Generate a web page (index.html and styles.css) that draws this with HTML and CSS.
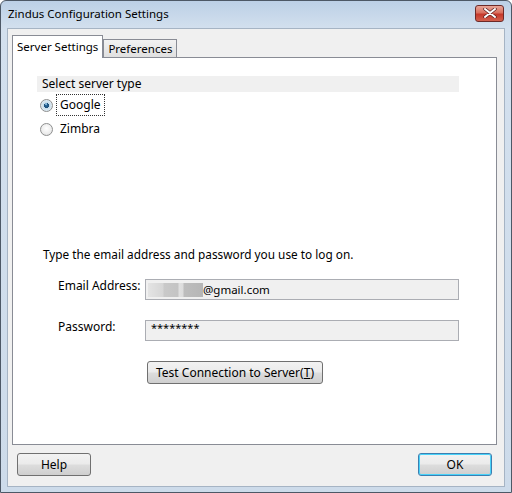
FILE: index.html
```html
<!DOCTYPE html>
<html lang="en">
<head>
    <meta charset="UTF-8">
    <title>Zindus Configuration Settings</title>
    <link rel="stylesheet" href="styles.css">
</head>
<body>
<div class="window">
    <div class="titlebar">
        <span class="title">Zindus Configuration Settings</span>
        <span class="close">
            <svg width="16" height="10" viewBox="0 0 16 10">
                <path d="M3 1 L13 9 M13 1 L3 9" stroke="#5a2020" stroke-width="3.4" stroke-linecap="round"/>
                <path d="M3 1 L13 9 M13 1 L3 9" stroke="#fff" stroke-width="2" stroke-linecap="round"/>
            </svg>
        </span>
    </div>
    <div class="client">
        <div class="tabs">
            <span class="tab active">Server Settings</span>
            <span class="tab">Preferences</span>
        </div>
        <div class="panel">
            <div class="group-label">Select server type</div>
            <div class="radio-list">
                <div class="radio-row">
                    <span class="radio checked"></span>
                    <span class="radio-text focus">Google</span>
                </div>
                <div class="radio-row">
                    <span class="radio"></span>
                    <span class="radio-text">Zimbra</span>
                </div>
            </div>
            <p class="hint">Type the email address and password you use to log on.</p>
            <div class="field">
                <label class="field-label">Email Address:</label>
                <div class="input"><span class="blur"></span>@gmail.com</div>
            </div>
            <div class="field">
                <label class="field-label">Password:</label>
                <div class="input secret">********</div>
            </div>
            <div class="test-row">
                <button class="btn test">Test Connection to Server(<u>T</u>)</button>
            </div>
        </div>
        <div class="footer">
            <button class="btn small">Help</button>
            <button class="btn small default">OK</button>
        </div>
    </div>
</div>
</body>
</html>
```

FILE: styles.css
```css
body {
    margin: 0;
    font-family: "Noto Sans", "DejaVu Sans", sans-serif;
    font-size: 12px;
    line-height: 16px;
    color: #000;
}
.window {
    width: 512px;
    height: 493px;
    box-sizing: border-box;
    border: 1px solid #4d5866;
    border-radius: 6px 6px 0 0;
    background: linear-gradient(to bottom, #bcd0e6 0, #d3e0ee 28px, #cddbea 100%);
    display: flex;
    flex-direction: column;
}
.titlebar {
    height: 27px;
    display: flex;
    align-items: center;
    justify-content: space-between;
    padding: 0 7px 0 7px;
}
.title {
    font-size: 11.5px;
    margin-top: -1px;
}
.close {
    width: 27px;
    height: 15px;
    margin-top: -3px;
    border: 1px solid #6d2a28;
    border-radius: 3px;
    background: linear-gradient(to bottom, #e8a597 0, #d9705f 45%, #c6382a 55%, #d2604e 100%);
    display: flex;
    align-items: center;
    justify-content: center;
}
.client {
    flex: 1;
    margin: 0 6px 5px 6px;
    background: #f0f0f0;
    border: 1px solid #a6b4c4;
    padding: 6px 7px 0 4px;
    display: flex;
    flex-direction: column;
}
.tabs {
    display: flex;
    align-items: flex-end;
    height: 22px;
    position: relative;
    z-index: 1;
}
.tab {
    height: 18px;
    line-height: 17px;
    padding: 0 4px;
    border: 1px solid #898c95;
    border-bottom: none;
    background: linear-gradient(to bottom, #f2f2f2, #e0e0e0);
    box-sizing: border-box;
    font-size: 11.5px;
}
.tab.active {
    height: 23px;
    line-height: 21px;
    background: #fff;
    margin-bottom: -1px;
    padding: 0 4px;
}
.panel {
    height: 388px;
    box-sizing: border-box;
    background: #fff;
    border: 1px solid #898c95;
    padding: 18px 37px 0 24px;
}
.group-label {
    background: #f0f0f0;
    height: 16px;
    line-height: 16px;
    padding-left: 5px;
}
.radio-list {
    padding: 1px 0 0 3px;
}
.radio-row {
    display: flex;
    align-items: center;
    height: 24px;
}
.radio {
    width: 11px;
    height: 11px;
    border-radius: 50%;
    border: 1px solid #8e8f8f;
    background: radial-gradient(circle at 50% 40%, #fff 0, #ececec 60%, #d6d6d6 100%);
    margin-right: 5px;
    position: relative;
}
.radio.checked {
    background: radial-gradient(circle at 50% 50%, #2b6b9e 0, #1c4f7a 30%, #c6dbe9 35%, #f4f8fb 100%);
}
.radio.checked::after {
    content: "";
    position: absolute;
    left: 4px;
    top: 3px;
    width: 2px;
    height: 2px;
    border-radius: 50%;
    background: #9fd0ef;
}
.radio-text {
    padding: 1px 2px;
}
.radio-text.focus {
    outline: 1px dotted #333;
    outline-offset: 1px;
}
.hint {
    margin: 105px 0 0 6px;
    font-size: 11.8px;
}
.field {
    display: flex;
    align-items: center;
    margin-top: 17px;
}
.field + .field {
    margin-top: 20px;
}
.field-label {
    padding-left: 21px;
    box-sizing: border-box;
    flex: none;
    width: 108px;
    margin-top: -7px;
}
.input {
    flex: 1;
    height: 21px;
    box-sizing: border-box;
    background: #f0f0f0;
    border: 1px solid #abadb3;
    display: flex;
    align-items: center;
    padding-left: 2px;
    font-size: 11.5px;
}
.input.secret {
    align-items: flex-start;
    padding-left: 5px;
    font-size: 11px;
    line-height: 14px;
}
.blur {
    width: 55px;
    height: 14px;
    background: linear-gradient(to right, #e4e4e4 0, #d6d6d6 15px, #c9c9c9 16px, #c4c4c4 30px, #e0e0e0 31px, #dcdcdc 35px, #bdbdbd 36px, #b6b6b6 55px);
}
.test-row {
    padding: 20px 0 0 110px;
}
.btn {
    font-family: "Noto Sans", "DejaVu Sans", sans-serif;
    font-size: 12px;
    height: 23px;
    border: 1px solid #707070;
    border-radius: 3px;
    background: linear-gradient(to bottom, #f2f2f2 0, #ebebeb 48%, #dddddd 52%, #cfcfcf 100%);
    padding: 0 4px;
    color: #000;
}
.btn.test {
    width: 176px;
}
.footer {
    display: flex;
    justify-content: space-between;
    padding: 8px 5px 0 5px;
}
.btn.small {
    width: 74px;
}
.btn.default {
    border-color: #3c7fb1;
    box-shadow: inset 0 0 0 1px #48d2f9;
}
```
